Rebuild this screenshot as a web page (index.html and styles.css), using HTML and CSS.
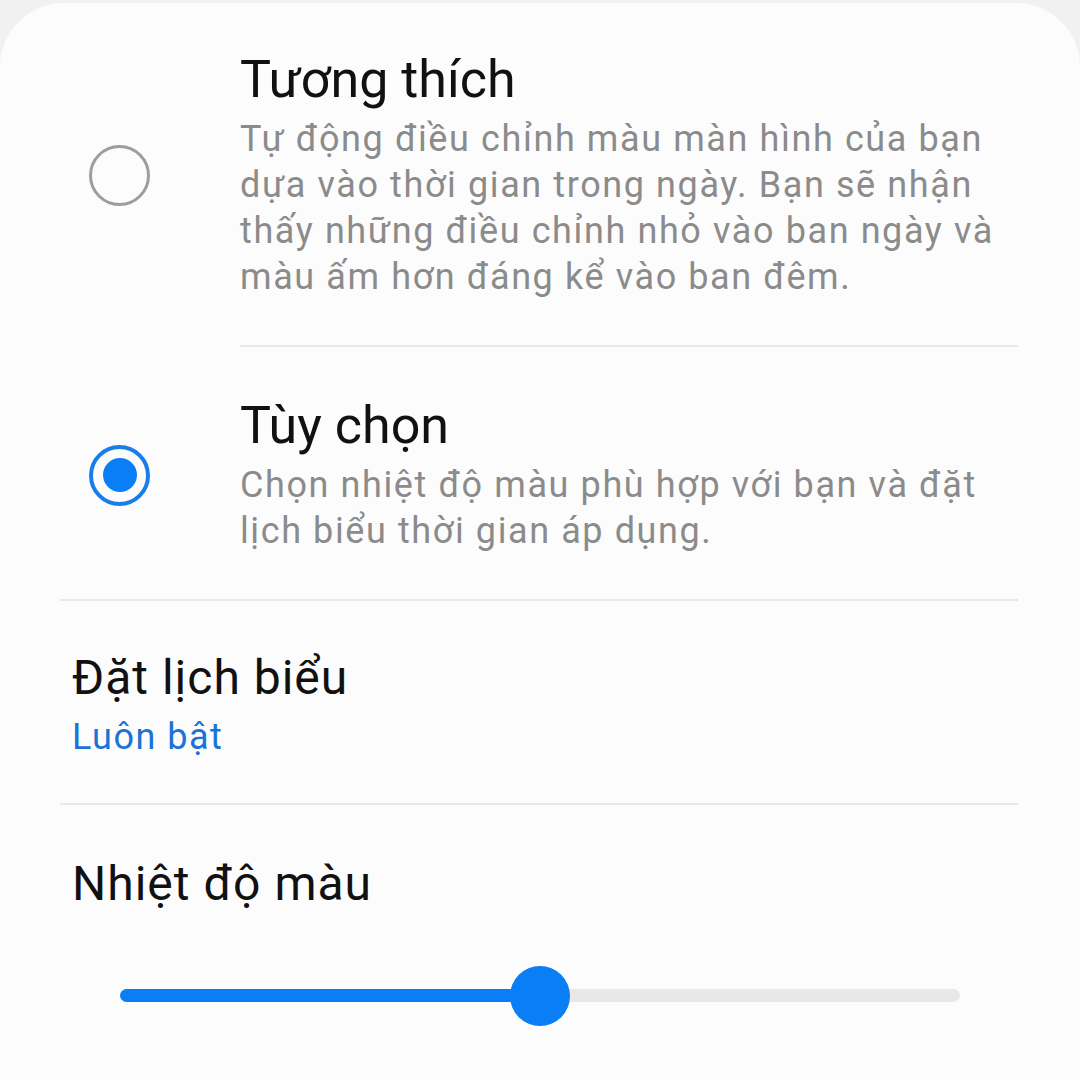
FILE: index.html
```html
<!DOCTYPE html>
<html lang="vi">
<head>
    <meta charset="UTF-8">
    <meta name="viewport" content="width=device-width, initial-scale=1.0">
    <title>Chế độ màu</title>
    <link rel="stylesheet" href="styles.css">
</head>
<body>
    <div class="panel">
        <div class="option first">
            <div class="radio"></div>
            <div class="option-text">
                <div class="option-title">Tương thích</div>
                <div class="option-desc">Tự động điều chỉnh màu màn hình của bạn dựa vào thời gian trong ngày. Bạn sẽ nhận thấy những điều chỉnh nhỏ vào ban ngày và màu ấm hơn đáng kể vào ban đêm.</div>
            </div>
        </div>
        <div class="divider inset"></div>
        <div class="option">
            <div class="radio checked"></div>
            <div class="option-text">
                <div class="option-title">Tùy chọn</div>
                <div class="option-desc">Chọn nhiệt độ màu phù hợp với bạn và đặt lịch biểu thời gian áp dụng.</div>
            </div>
        </div>
        <div class="divider"></div>
        <div class="setting">
            <div class="setting-title">Đặt lịch biểu</div>
            <div class="setting-value">Luôn bật</div>
        </div>
        <div class="divider"></div>
        <div class="setting temp">
            <div class="setting-title">Nhiệt độ màu</div>
        </div>
        <div class="slider">
            <div class="track">
                <div class="fill" style="width: 50%"></div>
                <div class="thumb" style="left: 50%"></div>
            </div>
        </div>
    </div>
</body>
</html>
```

FILE: styles.css
```css
body {
    margin: 0;
    background-color: #f1f1f1;
    font-family: Roboto, "Noto Sans", sans-serif;
    width: 1080px;
    height: 1080px;
    overflow: hidden;
}
.panel {
    background-color: #fcfcfc;
    margin-top: 3px;
    border-radius: 64px 64px 0 0;
    height: 1077px;
    box-sizing: border-box;
    padding: 0 62px 0 60px;
}
.option {
    display: flex;
    align-items: center;
    padding-top: 49px;
    padding-bottom: 45px;
}
.option.first {
    padding-top: 47px;
}
.radio {
    width: 61px;
    height: 61px;
    border: 3px solid #9d9d9d;
    border-radius: 50%;
    margin-left: 29px;
    margin-right: 90px;
    flex-shrink: 0;
    box-sizing: border-box;
    display: flex;
    align-items: center;
    justify-content: center;
}
.radio.checked {
    border: 4px solid #1a7ee8;
}
.radio.checked::after {
    content: "";
    width: 34px;
    height: 34px;
    border-radius: 50%;
    background-color: #0a7ff5;
}
.option-text {
    flex: 1;
}
.option-title {
    font-size: 52px;
    line-height: 60px;
    color: #111;
}
.option-desc {
    font-size: 36px;
    line-height: 46px;
    letter-spacing: 1.6px;
    color: #8b8b8b;
    margin-top: 6px;
}
.divider {
    height: 2px;
    background-color: #e8e8e8;
}
.divider.inset {
    margin-left: 180px;
}
.setting {
    padding: 48px 0 43px 12px;
}
.setting-title {
    font-size: 48px;
    line-height: 58px;
    letter-spacing: 1px;
    color: #111;
}
.setting-value {
    font-size: 36px;
    line-height: 46px;
    letter-spacing: 1.5px;
    color: #1a73d6;
    margin-top: 7px;
}
.setting.temp {
    padding-top: 50px;
    padding-bottom: 0;
}
.slider {
    padding: 76px 58px 0 60px;
}
.track {
    position: relative;
    height: 13px;
    border-radius: 7px;
    background-color: #e8e8e8;
}
.fill {
    height: 13px;
    border-radius: 7px;
    background-color: #0a7ff5;
}
.thumb {
    position: absolute;
    top: 50%;
    width: 60px;
    height: 60px;
    border-radius: 50%;
    background-color: #0a7ff5;
    transform: translate(-50%, -50%);
}
```
